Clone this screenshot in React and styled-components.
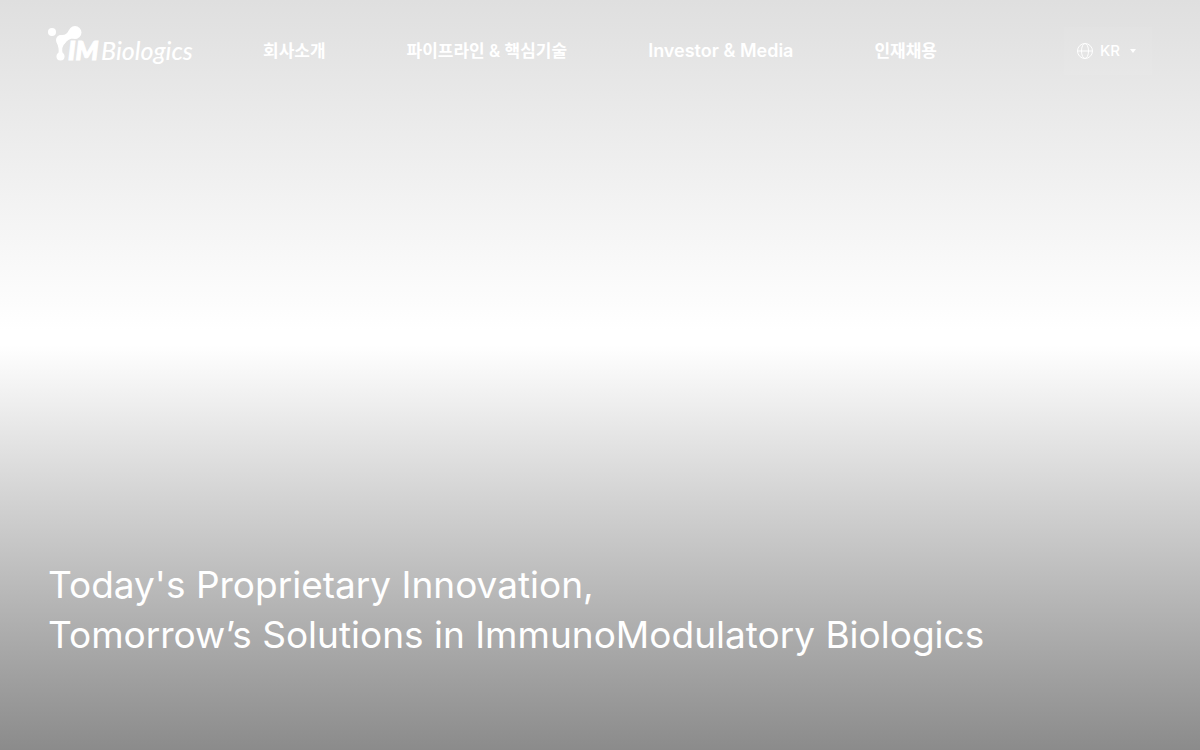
import React from "react";
import styled, { createGlobalStyle } from "styled-components";

const GlobalStyle = createGlobalStyle`
  *, *::before, *::after { box-sizing: border-box; }
  body {
    margin: 0;
    background: #fff;
    color: #fff;
    font-family: Inter, "Noto Sans CJK KR", sans-serif;
  }
`;

const Hero = styled.div`
  display: flex;
  flex-direction: column;
  justify-content: space-between;
  min-height: 100vh;
  background: linear-gradient(180deg, #dfdfdf 0%, #fff 44%, #fff 46%, #8b8b8b 100%);
`;

const Header = styled.header`
  display: flex;
  align-items: center;
  height: 102px;
  padding: 0 48px;
`;

const LogoLink = styled.a`
  display: block;
  width: 144px;
  height: 50px;
  margin-right: 71px;
  color: inherit;

  svg { display: block; overflow: visible; }
`;

const Menu = styled.ul`
  display: flex;
  gap: 81px;
  margin: 0;
  padding: 0;
  list-style: none;
`;

const MenuLink = styled.a`
  display: block;
  color: inherit;
  font-size: ${({ $latin }) => ($latin ? 18 : 17)}px;
  font-weight: 600;
  line-height: 28px;
  text-decoration: none;
  white-space: nowrap;
`;

const LanguageButton = styled.button`
  display: flex;
  align-items: center;
  gap: 6px;
  height: 48px;
  margin-left: auto;
  padding: 0 16px 0 12px;
  border: 0;
  background: rgba(255, 255, 255, 0.05);
  color: inherit;
  font: 500 15px/24px Inter, sans-serif;
  cursor: pointer;
`;

const Caret = styled.svg`
  margin-left: 4px;
`;

const Headline = styled.h1`
  margin: 0;
  padding: 0 48px 90px;
  font-size: 37px;
  font-weight: 400;
  line-height: 50px;
`;

const Line = styled.span`
  display: block;
`;

const menu = [
  { label: "회사소개" },
  { label: "파이프라인 & 핵심기술" },
  { label: "Investor & Media", latin: true },
  { label: "인재채용" },
];

function Logo() {
  return (
    <svg width="144" height="50" viewBox="0 0 144 50" fill="#fff" role="img" aria-label="IM Biologics">
      <circle cx="4" cy="6" r="4" />
      <circle cx="13" cy="14" r="5" />
      <circle cx="27" cy="6.5" r="6.5" />
      <circle cx="12.5" cy="30.5" r="4" />
      <path d="M14 9Q19 9 21 4L29.500 12.500Q23 11.500 18.500 15.500Q15 19 14.300 22Q13.800 25 15 28.500L10 28.500Q12 24 8.500 16Z" />
      <text x="20" y="34" fontFamily="Lato, sans-serif" fontSize="26" fontWeight="900" fontStyle="italic" stroke="#fff">IM</text>
      <text x="53" y="34" fontFamily="Lato, sans-serif" fontSize="25" fontWeight="500" fontStyle="italic">Biologics</text>
    </svg>
  );
}

function Globe() {
  return (
    <svg width="18" height="18" viewBox="0 0 18 18" fill="none" stroke="#fff" aria-hidden="true">
      <circle cx="9" cy="9" r="7.5" />
      <ellipse cx="9" cy="9" rx="3.5" ry="7.5" />
      <path d="M1.5 9h15" />
    </svg>
  );
}

export default function App() {
  return (
    <>
      <GlobalStyle />
      <Hero>
        <Header>
          <LogoLink href="#"><Logo /></LogoLink>
          <nav>
            <Menu>
              {menu.map(({ label, latin }) => (
                <li key={label}><MenuLink href="#" $latin={latin}>{label}</MenuLink></li>
              ))}
            </Menu>
          </nav>
          <LanguageButton type="button">
            <Globe />
            KR
            <Caret width="6" height="4" viewBox="0 0 6 4" fill="#fff" aria-hidden="true">
              <path d="M0 0h6L3 4Z" />
            </Caret>
          </LanguageButton>
        </Header>
        <Headline>
          <Line>Today's Proprietary Innovation,</Line>
          <Line>Tomorrow’s Solutions in ImmunoModulatory Biologics</Line>
        </Headline>
      </Hero>
    </>
  );
}
